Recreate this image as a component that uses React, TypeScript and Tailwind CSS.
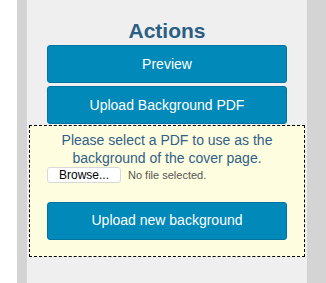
export default function App() {
  return (
    <div className="flex h-[283px] w-[326px] bg-white font-['Liberation_Sans',Arial,sans-serif]">
      <div className="w-[17px] bg-white" />
      <div className="w-[10px] bg-[#d4d4d4]" />
      <div className="flex w-[280px] flex-col bg-[#efefef] pt-[19px]">
        <h2 className="text-center text-[21px] font-bold leading-[24px] text-[#2b5e84]">Actions</h2>
        <div className="mx-[20px] mt-[2px] flex flex-col gap-[3px]">
          <button className="h-[38px] rounded-[3px] border border-[#0074a0] bg-[#0089b9] text-[14px] text-white">
            Preview
          </button>
          <button className="h-[38px] rounded-[3px] border border-[#0074a0] bg-[#0089b9] text-[14px] text-white">
            Upload Background PDF
          </button>
        </div>
        <div className="mx-[2px] mt-[1px] border border-dashed border-black bg-[#fffde0] px-[17px] pt-[5px] pb-[16px]">
          <p className="text-center text-[14px] leading-[18px] text-[#2f6088]">
            Please select a PDF to use as the background of the cover page.
          </p>
          <div className="flex items-center gap-[7px]">
            <span className="flex h-[16px] w-[74px] items-center justify-center rounded-[3px] border border-[#d8d8d8] bg-white text-[12px] text-black">
              Browse...
            </span>
            <span className="text-[11px] text-[#555]">No file selected.</span>
          </div>
          <button className="mt-[18px] h-[38px] w-full rounded-[3px] border border-[#0074a0] bg-[#0089b9] text-[14px] text-white">
            Upload new background
          </button>
        </div>
      </div>
      <div className="flex-1 bg-[#d4d4d4]" />
    </div>
  )
}
